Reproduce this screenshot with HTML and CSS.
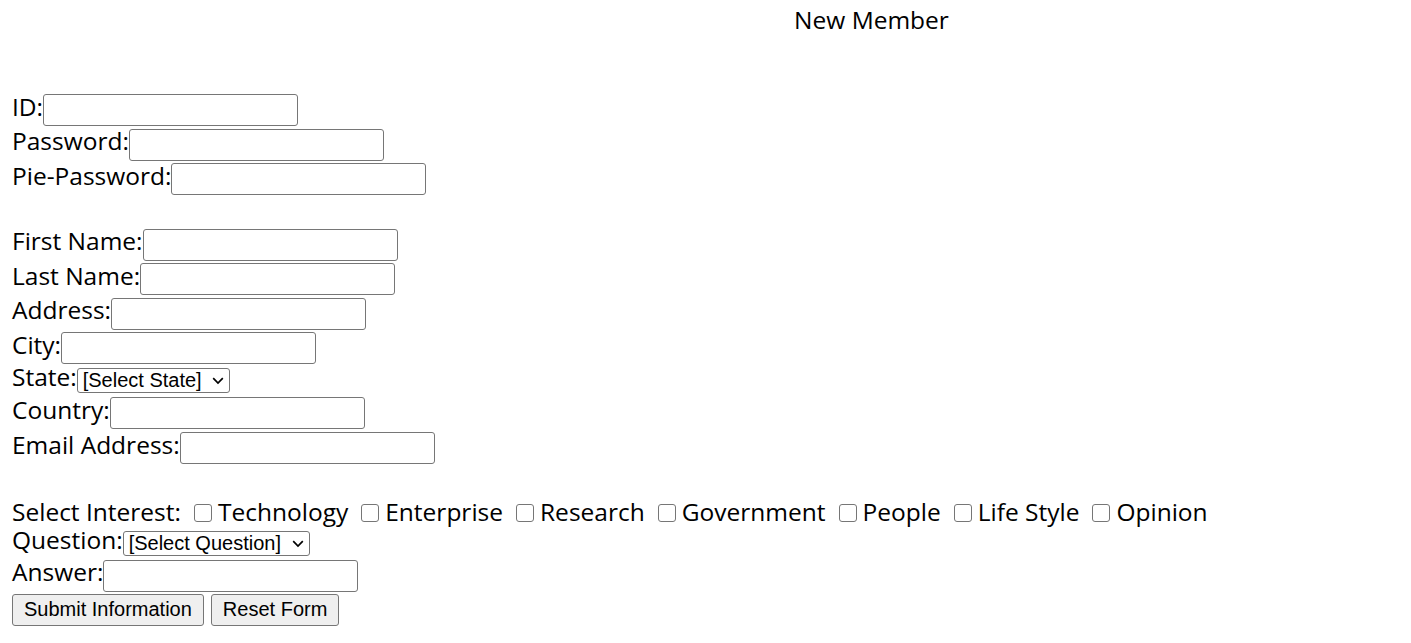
FILE: index.html
```html
<!DOCTYPE html>
<html lang="en">
<head>
<meta charset="utf-8">
<title>New Member</title>
<link rel="stylesheet" href="styles.css">
</head>
<body>
<div class="title">New Member</div>
<form class="form">
  <div class="group">
    <div class="row"><label class="lbl" for="id">ID:</label><input class="field" id="id" type="text"></div>
    <div class="row"><label class="lbl" for="pw">Password:</label><input class="field" id="pw" type="password"></div>
    <div class="row"><label class="lbl" for="pw2">Pie-Password:</label><input class="field" id="pw2" type="password"></div>
  </div>
  <div class="group gap">
    <div class="row"><label class="lbl" for="fn">First Name:</label><input class="field" id="fn" type="text"></div>
    <div class="row"><label class="lbl" for="ln">Last Name:</label><input class="field" id="ln" type="text"></div>
    <div class="row"><label class="lbl" for="ad">Address:</label><input class="field" id="ad" type="text"></div>
    <div class="row"><label class="lbl" for="ci">City:</label><input class="field" id="ci" type="text"></div>
    <div class="row short"><label class="lbl" for="st">State:</label>
      <span class="select"><select id="st"><option>[Select State]</option></select><svg class="chev" viewBox="0 0 12 8" width="12" height="8"><path d="M1.2 1.2 L6 6 L10.8 1.2" fill="none" stroke="#000" stroke-width="1.7"/></svg></span>
    </div>
    <div class="row"><label class="lbl" for="co">Country:</label><input class="field" id="co" type="text"></div>
    <div class="row"><label class="lbl" for="em">Email Address:</label><input class="field" id="em" type="text"></div>
  </div>
  <div class="group gap">
    <div class="row interests">
      <span class="lbl">Select Interest:</span>
      <label class="opt"><input class="box" type="checkbox">Technology</label>
      <label class="opt"><input class="box" type="checkbox">Enterprise</label>
      <label class="opt"><input class="box" type="checkbox">Research</label>
      <label class="opt"><input class="box" type="checkbox">Government</label>
      <label class="opt"><input class="box" type="checkbox">People</label>
      <label class="opt"><input class="box" type="checkbox">Life Style</label>
      <label class="opt"><input class="box" type="checkbox">Opinion</label>
    </div>
    <div class="row short"><label class="lbl" for="q">Question:</label>
      <span class="select"><select id="q"><option>[Select Question]</option></select><svg class="chev" viewBox="0 0 12 8" width="12" height="8"><path d="M1.2 1.2 L6 6 L10.8 1.2" fill="none" stroke="#000" stroke-width="1.7"/></svg></span>
    </div>
    <div class="row"><label class="lbl" for="an">Answer:</label><input class="field" id="an" type="text"></div>
    <div class="buttons">
      <button class="btn" type="submit">Submit Information</button>
      <button class="btn" type="reset">Reset Form</button>
    </div>
  </div>
</form>
</body>
</html>
```

FILE: styles.css
```css
html, body {
  margin: 0;
  padding: 0;
  background: #fff;
}
body {
  padding: 0 12px;
  font-family: "Open Sans", "Noto Sans", sans-serif;
  font-size: 24.5px;
  color: #000;
}
.title {
  padding-left: 332px;
  text-align: center;
  line-height: 32px;
  padding-top: 4px;
  height: 33px;
}
.form {
  margin-top: 56px;
  display: flex;
  flex-direction: column;
}
.group {
  display: flex;
  flex-direction: column;
}
.group.gap {
  margin-top: 30.5px;
}
.row {
  display: flex;
  align-items: center;
  height: 34.6px;
}
.row.short {
  height: 30.5px;
}
.row.interests {
  height: 32px;
}
.lbl {
  line-height: 32px;
  margin-bottom: 7px;
  white-space: pre;
}
.field {
  box-sizing: border-box;
  width: 255px;
  height: 32px;
  margin: 0;
  padding: 0 3px;
  border: 1px solid #767676;
  border-radius: 3px;
  background: #fff;
  font: 20px "Liberation Sans", Arial, sans-serif;
}
.select {
  position: relative;
  display: inline-flex;
}
.select select {
  appearance: none;
  -webkit-appearance: none;
  box-sizing: border-box;
  height: 25px;
  margin: 0;
  padding: 0 27px 0 5px;
  border: 1px solid #767676;
  border-radius: 3px;
  background: #fff;
  color: #000;
  font: 20px "Liberation Sans", Arial, sans-serif;
  line-height: 23px;
}
.chev {
  position: absolute;
  right: 6px;
  top: 9px;
  pointer-events: none;
}
.interests .lbl {
  margin-bottom: 0;
}
.opt {
  display: flex;
  align-items: center;
  line-height: 32px;
  white-space: pre;
}
.box {
  appearance: none;
  -webkit-appearance: none;
  box-sizing: border-box;
  width: 18px;
  height: 18px;
  margin: 3px 6px 0 13px;
  border: 1px solid #767676;
  border-radius: 3px;
  background: #fff;
}
.buttons {
  display: flex;
  gap: 7px;
  height: 33px;
  align-items: flex-end;
}
.btn {
  box-sizing: border-box;
  height: 32px;
  margin: 0;
  padding: 0 11px;
  border: 1px solid #767676;
  border-radius: 3px;
  background: #efefef;
  color: #000;
  font: 20px "Liberation Sans", Arial, sans-serif;
}
```
